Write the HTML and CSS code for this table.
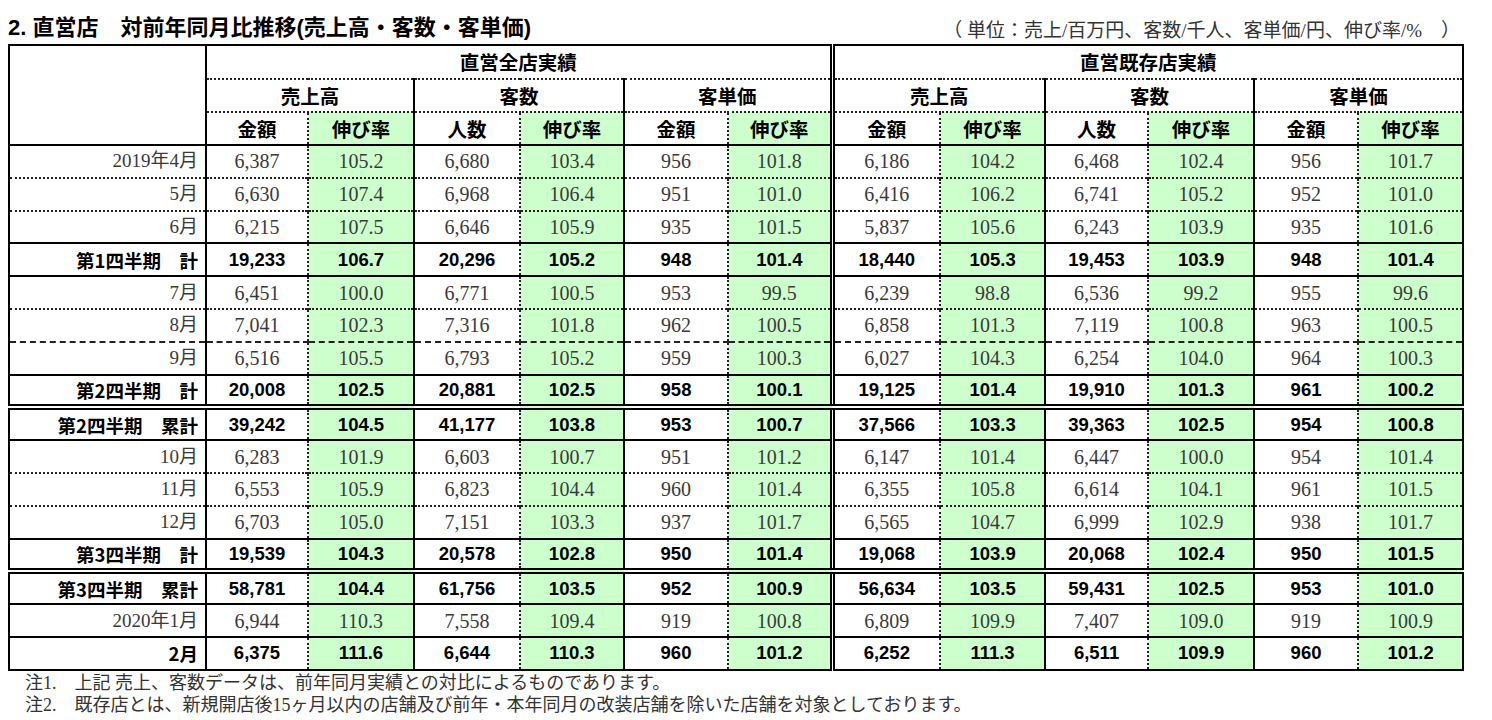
FILE: index.html
```html
<!DOCTYPE html>
<html lang="ja">
<head>
<meta charset="utf-8">
<title>直営店 対前年同月比推移</title>
<link rel="stylesheet" href="styles.css">
</head>
<body>
<div class="page">
  <div class="topline">
    <h1 class="title">2. 直営店　対前年同月比推移(売上高・客数・客単価)</h1>
    <div class="unit">（ 単位：売上/百万円、客数/千人、客単価/円、伸び率/%　）</div>
  </div>
  <table class="tbl">
    <colgroup>
      <col class="c-lbl">
      <col style="width:102px"><col style="width:106px"><col style="width:106px"><col style="width:104px"><col style="width:104px"><col style="width:104px">
      <col style="width:108px"><col style="width:105px"><col style="width:103px"><col style="width:106px"><col style="width:104px"><col style="width:105px">
    </colgroup>
    <thead>
      <tr class="h1">
        <th class="corner" rowspan="3"></th>
        <th class="gs" colspan="6">直営全店実績</th>
        <th class="gd" colspan="6">直営既存店実績</th>
      </tr>
      <tr class="h2">
        <th class="gs" colspan="2">売上高</th>
        <th class="gs" colspan="2">客数</th>
        <th class="gs" colspan="2">客単価</th>
        <th class="gd" colspan="2">売上高</th>
        <th class="gs" colspan="2">客数</th>
        <th class="gs" colspan="2">客単価</th>
      </tr>
      <tr class="h3">
        <th class="gs">金額</th><th class="gr">伸び率</th>
        <th class="gs">人数</th><th class="gr">伸び率</th>
        <th class="gs">金額</th><th class="gr">伸び率</th>
        <th class="gd">金額</th><th class="gr">伸び率</th>
        <th class="gs">人数</th><th class="gr">伸び率</th>
        <th class="gs">金額</th><th class="gr">伸び率</th>
      </tr>
    </thead>
    <tbody>
      <tr class="m first">
        <td class="lbl">2019年4月</td>
        <td class="gs">6,387</td><td class="gr">105.2</td><td class="gs">6,680</td><td class="gr">103.4</td><td class="gs">956</td><td class="gr">101.8</td>
        <td class="gd">6,186</td><td class="gr">104.2</td><td class="gs">6,468</td><td class="gr">102.4</td><td class="gs">956</td><td class="gr">101.7</td>
      </tr>
      <tr class="m dot">
        <td class="lbl">5月</td>
        <td class="gs">6,630</td><td class="gr">107.4</td><td class="gs">6,968</td><td class="gr">106.4</td><td class="gs">951</td><td class="gr">101.0</td>
        <td class="gd">6,416</td><td class="gr">106.2</td><td class="gs">6,741</td><td class="gr">105.2</td><td class="gs">952</td><td class="gr">101.0</td>
      </tr>
      <tr class="m dot">
        <td class="lbl">6月</td>
        <td class="gs">6,215</td><td class="gr">107.5</td><td class="gs">6,646</td><td class="gr">105.9</td><td class="gs">935</td><td class="gr">101.5</td>
        <td class="gd">5,837</td><td class="gr">105.6</td><td class="gs">6,243</td><td class="gr">103.9</td><td class="gs">935</td><td class="gr">101.6</td>
      </tr>
      <tr class="b solid">
        <td class="lbl">第1四半期　計</td>
        <td class="gs">19,233</td><td class="gr">106.7</td><td class="gs">20,296</td><td class="gr">105.2</td><td class="gs">948</td><td class="gr">101.4</td>
        <td class="gd">18,440</td><td class="gr">105.3</td><td class="gs">19,453</td><td class="gr">103.9</td><td class="gs">948</td><td class="gr">101.4</td>
      </tr>
      <tr class="m solid">
        <td class="lbl">7月</td>
        <td class="gs">6,451</td><td class="gr">100.0</td><td class="gs">6,771</td><td class="gr">100.5</td><td class="gs">953</td><td class="gr">99.5</td>
        <td class="gd">6,239</td><td class="gr">98.8</td><td class="gs">6,536</td><td class="gr">99.2</td><td class="gs">955</td><td class="gr">99.6</td>
      </tr>
      <tr class="m dot">
        <td class="lbl">8月</td>
        <td class="gs">7,041</td><td class="gr">102.3</td><td class="gs">7,316</td><td class="gr">101.8</td><td class="gs">962</td><td class="gr">100.5</td>
        <td class="gd">6,858</td><td class="gr">101.3</td><td class="gs">7,119</td><td class="gr">100.8</td><td class="gs">963</td><td class="gr">100.5</td>
      </tr>
      <tr class="m dash">
        <td class="lbl">9月</td>
        <td class="gs">6,516</td><td class="gr">105.5</td><td class="gs">6,793</td><td class="gr">105.2</td><td class="gs">959</td><td class="gr">100.3</td>
        <td class="gd">6,027</td><td class="gr">104.3</td><td class="gs">6,254</td><td class="gr">104.0</td><td class="gs">964</td><td class="gr">100.3</td>
      </tr>
      <tr class="b solid">
        <td class="lbl">第2四半期　計</td>
        <td class="gs">20,008</td><td class="gr">102.5</td><td class="gs">20,881</td><td class="gr">102.5</td><td class="gs">958</td><td class="gr">100.1</td>
        <td class="gd">19,125</td><td class="gr">101.4</td><td class="gs">19,910</td><td class="gr">101.3</td><td class="gs">961</td><td class="gr">100.2</td>
      </tr>
      <tr class="b dbl">
        <td class="lbl">第2四半期　累計</td>
        <td class="gs">39,242</td><td class="gr">104.5</td><td class="gs">41,177</td><td class="gr">103.8</td><td class="gs">953</td><td class="gr">100.7</td>
        <td class="gd">37,566</td><td class="gr">103.3</td><td class="gs">39,363</td><td class="gr">102.5</td><td class="gs">954</td><td class="gr">100.8</td>
      </tr>
      <tr class="m solid">
        <td class="lbl">10月</td>
        <td class="gs">6,283</td><td class="gr">101.9</td><td class="gs">6,603</td><td class="gr">100.7</td><td class="gs">951</td><td class="gr">101.2</td>
        <td class="gd">6,147</td><td class="gr">101.4</td><td class="gs">6,447</td><td class="gr">100.0</td><td class="gs">954</td><td class="gr">101.4</td>
      </tr>
      <tr class="m dot">
        <td class="lbl">11月</td>
        <td class="gs">6,553</td><td class="gr">105.9</td><td class="gs">6,823</td><td class="gr">104.4</td><td class="gs">960</td><td class="gr">101.4</td>
        <td class="gd">6,355</td><td class="gr">105.8</td><td class="gs">6,614</td><td class="gr">104.1</td><td class="gs">961</td><td class="gr">101.5</td>
      </tr>
      <tr class="m dot">
        <td class="lbl">12月</td>
        <td class="gs">6,703</td><td class="gr">105.0</td><td class="gs">7,151</td><td class="gr">103.3</td><td class="gs">937</td><td class="gr">101.7</td>
        <td class="gd">6,565</td><td class="gr">104.7</td><td class="gs">6,999</td><td class="gr">102.9</td><td class="gs">938</td><td class="gr">101.7</td>
      </tr>
      <tr class="b solid">
        <td class="lbl">第3四半期　計</td>
        <td class="gs">19,539</td><td class="gr">104.3</td><td class="gs">20,578</td><td class="gr">102.8</td><td class="gs">950</td><td class="gr">101.4</td>
        <td class="gd">19,068</td><td class="gr">103.9</td><td class="gs">20,068</td><td class="gr">102.4</td><td class="gs">950</td><td class="gr">101.5</td>
      </tr>
      <tr class="b dbl">
        <td class="lbl">第3四半期　累計</td>
        <td class="gs">58,781</td><td class="gr">104.4</td><td class="gs">61,756</td><td class="gr">103.5</td><td class="gs">952</td><td class="gr">100.9</td>
        <td class="gd">56,634</td><td class="gr">103.5</td><td class="gs">59,431</td><td class="gr">102.5</td><td class="gs">953</td><td class="gr">101.0</td>
      </tr>
      <tr class="m solid">
        <td class="lbl">2020年1月</td>
        <td class="gs">6,944</td><td class="gr">110.3</td><td class="gs">7,558</td><td class="gr">109.4</td><td class="gs">919</td><td class="gr">100.8</td>
        <td class="gd">6,809</td><td class="gr">109.9</td><td class="gs">7,407</td><td class="gr">109.0</td><td class="gs">919</td><td class="gr">100.9</td>
      </tr>
      <tr class="b solid">
        <td class="lbl">2月</td>
        <td class="gs">6,375</td><td class="gr">111.6</td><td class="gs">6,644</td><td class="gr">110.3</td><td class="gs">960</td><td class="gr">101.2</td>
        <td class="gd">6,252</td><td class="gr">111.3</td><td class="gs">6,511</td><td class="gr">109.9</td><td class="gs">960</td><td class="gr">101.2</td>
      </tr>
    </tbody>
  </table>
  <div class="notes">
    <p>注1.　上記 売上、客数データは、前年同月実績との対比によるものであります。</p>
    <p>注2.　既存店とは、新規開店後15ヶ月以内の店舗及び前年・本年同月の改装店舗を除いた店舗を対象としております。</p>
  </div>
</div>
</body>
</html>
```

FILE: styles.css
```css
html, body {
  margin: 0;
  padding: 0;
  background: #ffffff;
}

.page {
  padding-left: 8px;
  font-family: "Noto Sans CJK JP", sans-serif;
  color: #000;
}

.topline {
  width: 1454px;
  height: 44px;
  display: flex;
  justify-content: space-between;
  align-items: flex-end;
}

.title {
  margin: 0;
  padding-bottom: 4px;
  font-family: "Liberation Sans", "Noto Sans CJK JP", sans-serif;
  font-size: 22px;
  line-height: 24px;
  font-weight: 700;
}

.unit {
  padding-bottom: 2px;
  padding-right: 2px;
  font-family: "Liberation Serif", "Noto Sans CJK JP", serif;
  font-size: 19px;
  line-height: 22px;
  color: #333;
}

.tbl {
  width: 1454px;
  table-layout: fixed;
  border-collapse: collapse;
  border: 2px solid #000;
}

.c-lbl {
  width: 197px;
}

.tbl th,
.tbl td {
  padding: 0;
  text-align: center;
  vertical-align: middle;
  white-space: nowrap;
}

.tbl thead th {
  font-family: "Noto Sans CJK JP", sans-serif;
  font-weight: 700;
  font-size: 19.5px;
  line-height: 22px;
  color: #000;
}

.h1 th {
  height: 32px;
  border-bottom: 2px dotted #222;
}

.h2 th {
  height: 31px;
  border-bottom: 2px dotted #222;
}

.h3 th {
  height: 31px;
  border-bottom: 2px solid #000;
}

.tbl th.corner {
  border-right: 2px solid #000;
  border-bottom: 2px solid #000;
}

.gs {
  border-left: 2px solid #000;
}

.gd {
  border-left: 5px double #000;
}

.gr {
  border-left: 2px dotted #222;
  background: #ccffcc;
}

.tbl tbody tr {
  height: 32.8px;
}

.tbl tbody td {
  line-height: 22px;
}

.dot > td {
  border-top: 2px dotted #222;
}

.dash > td {
  border-top: 2px dashed #222;
}

.solid > td {
  border-top: 2px solid #000;
}

.dbl > td {
  border-top: 6px double #000;
}

.m > td {
  font-family: "Liberation Serif", "Noto Sans CJK JP", serif;
  font-size: 20px;
  color: #3a3a3a;
}

.b > td {
  font-family: "Liberation Sans", "Noto Sans CJK JP", sans-serif;
  font-size: 18.5px;
  font-weight: 700;
  color: #000;
}

.tbl td.lbl {
  text-align: right;
  padding-right: 7px;
}

.m > td.lbl {
  font-size: 19px;
}

.b > td.lbl {
  font-family: "Noto Sans CJK JP", sans-serif;
  font-size: 18.5px;
}

.notes {
  padding-left: 17px;
  padding-top: 1px;
  font-family: "Liberation Serif", "Noto Sans CJK JP", serif;
  font-size: 18px;
  line-height: 22px;
  color: #333;
}

.notes p {
  margin: 0;
}
```
